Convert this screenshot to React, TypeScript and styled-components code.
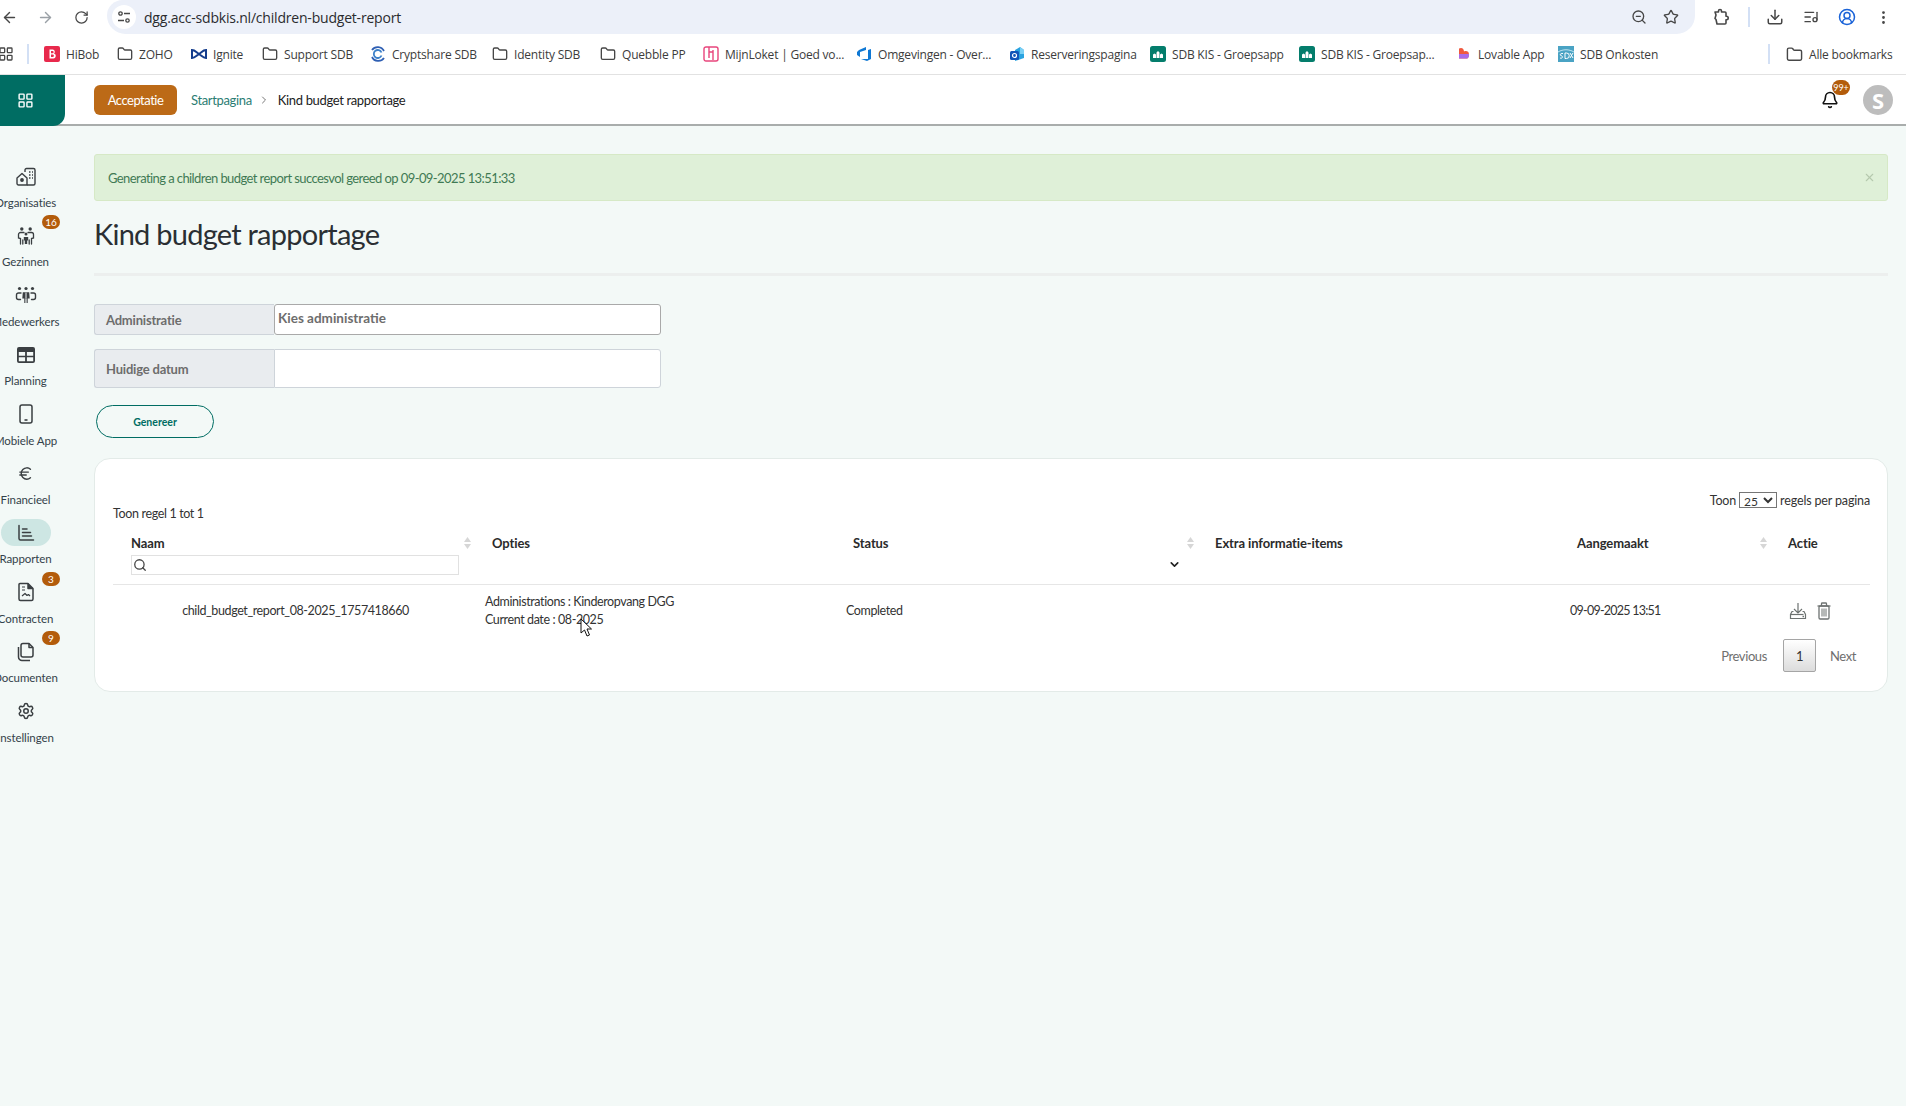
import React from 'react';
import styled, { createGlobalStyle } from 'styled-components';
import { ArrowLeft, ArrowRight, RotateCw, ZoomOut, Star, Download, ListMusic, CircleUserRound, EllipsisVertical, LayoutGrid, Folder, Bell, Search, X, ChevronDown, ChevronRight, Settings, Euro } from 'lucide-react';

const Global = createGlobalStyle`
  html, body { margin: 0; padding: 0; background: #f3f9f7; }
  * { box-sizing: border-box; }
  #root { min-height: 1106px; }
`;

const sans = `"Lato", "Noto Sans", sans-serif`;
const ui = `"Open Sans", "Noto Sans", sans-serif`;

const Page = styled.div`
  width: 1906px; height: 1106px; overflow: hidden; position: relative;
  display: flex; flex-direction: column; background: #f3f9f7; font-family: ${sans}; color: #333;
`;
const TopBar = styled.div`
  height: 36px; background: #fff; display: flex; align-items: flex-start; flex: none;
`;
const NavGroup = styled.div`
  display: flex; margin-left: -9px;
`;
const Slot = styled.div<{ $muted?: boolean; $color?: string; $narrow?: boolean; $gap?: boolean }>`
  width: ${p => (p.$narrow ? '32px' : '36px')}; height: 34px; flex: none; display: flex; align-items: center; justify-content: center;
  margin-left: ${p => (p.$gap ? '8px' : '0')};
  color: ${p => p.$color ?? (p.$muted ? '#9aa0a6' : '#474747')};
`;
const Address = styled.div`
  width: 1588px; height: 34px; margin-left: 8px; background: #ecf0f9; border-radius: 0 0 20px 20px / 0 0 20px 20px;
  border-top-left-radius: 17px; display: flex; align-items: center; padding: 0 8px 0 5px; flex: none;
`;
const TuneCircle = styled.div`
  width: 24px; height: 24px; border-radius: 50%; background: #fff; display: flex; align-items: center; justify-content: center; flex: none;
`;
const Url = styled.span`
  margin-left: 8px; font-family: ${ui}; font-size: 14px; color: #2a2b2e; flex: 1; white-space: nowrap; letter-spacing: -0.2px;
`;
const Sep = styled.div`
  width: 2px; height: 20px; background: #d3e0f5; margin: 7px 7px 0 9px; flex: none;
`;
const BookBar = styled.div`
  height: 39px; background: #fff; border-bottom: 1px solid #e2e2e2; display: flex; align-items: center; flex: none; position: relative; padding-bottom: 2px;
`;
const AppsIcon = styled.div`
  width: 29px; flex: none; display: flex; color: #474747; margin-left: -2px;
`;
const BookSep = styled.div<{ $end?: boolean }>`
  width: 2px; height: 20px; background: #d3e0f5; flex: none;
  margin-left: ${p => (p.$end ? '100px' : '0')};
  margin-right: ${p => (p.$end ? '16px' : '15px')};
`;
const Book = styled.div<{ $w: number }>`
  width: ${p => p.$w}px; flex: none; display: flex; align-items: center; gap: 6px;
  font-family: ${ui}; font-size: 12px; color: #3c3c3c; white-space: nowrap; letter-spacing: -0.2px;
`;
const FolderIcon = styled(Folder)`
  color: #474747; flex: none;
`;
const AppHeader = styled.header`
  height: 51px; background: #fff; border-bottom: 2px solid #a9adac; display: flex; align-items: center; flex: none; position: relative;
`;
const Brand = styled.div`
  width: 65px; height: 51px; margin-bottom: -2px; padding-right: 15px; background: #006d63; border-bottom-right-radius: 12px; display: flex; align-items: center; justify-content: center; color: #fff; flex: none;
`;
const EnvButton = styled.div`
  margin-left: 29px; width: 83px; height: 30px; background: #bc6a17; color: #fff; border-radius: 6px; font-size: 13px; letter-spacing: -0.5px; display: flex; align-items: center; justify-content: center; flex: none;
`;
const Crumbs = styled.nav`
  margin-left: 14px; display: flex; align-items: center; font-size: 13px; color: #222; flex: 1; letter-spacing: -0.35px;
`;
const CrumbLink = styled.span`
  color: #2b7d73;
`;
const CrumbSep = styled(ChevronRight)`
  color: #777; margin: 0 8px 0 6px;
`;
const BellWrap = styled.div`
  position: relative; width: 24px; height: 24px; display: flex; align-items: center; justify-content: center; color: #111; margin-right: 21px;
`;
const BellBadge = styled.span`
  position: absolute; left: 14px; top: -8px; width: 18px; height: 15px; border-radius: 8px; background: #b35c0b; color: #fff; font-size: 9px; display: flex; align-items: center; justify-content: center;
`;
const Avatar = styled.div`
  width: 30px; height: 30px; border-radius: 50%; background: #bdbdbd; color: #fff; font: 700 22px ${ui}; display: flex; align-items: center; justify-content: center; margin-right: 13px;
`;
const Body = styled.div`
  flex: 1; display: flex; min-height: 0;
`;
const Sidebar = styled.aside`
  width: 94px; flex: none; padding-top: 37px; display: flex; flex-direction: column;
`;
const NavItem = styled.div`
  width: 51px; height: 59.4px; flex: none; display: flex; flex-direction: column; align-items: center; position: relative;
`;
const NavIcon = styled.div<{ $active?: boolean }>`
  width: 50px; height: 27px; flex: none; border-radius: 14px; display: flex; align-items: center; justify-content: center; color: #3a3f42;
  background: ${p => (p.$active ? '#cde6e3' : 'transparent')};
`;
const NavLabel = styled.span`
  margin-top: 4px; font-size: 11.5px; line-height: 17px; color: #33424a; white-space: nowrap; letter-spacing: -0.1px;
`;
const NavBadge = styled.span`
  position: absolute; left: 42px; top: -7px; width: 18px; height: 14px; border-radius: 7px; background: #b35c0b; color: #fff; font-size: 10px; display: flex; align-items: center; justify-content: center;
`;
const Main = styled.main`
  flex: 1; min-width: 0; padding: 28px 18px 0 0;
`;
const Alert = styled.div`
  height: 47px; background: #dff0d8; border: 1px solid #d6e9c6; border-radius: 3px; color: #3f7a54; font-size: 13px; letter-spacing: -0.58px; display: flex; align-items: center; justify-content: space-between; padding: 0 11px 0 13px;
`;
const CloseIcon = styled(X)`
  color: #b5c9ae;
`;
const Title = styled.h1`
  margin: 15px 0 0; font-size: 29px; font-weight: 400; line-height: 36px; color: #2a2f33; letter-spacing: -0.75px;
`;
const Rule = styled.hr`
  margin: 21px 0 0; height: 3px; border: 0; background: #ecefee;
`;
const FormRow = styled.div<{ $h: number; $mt: number }>`
  width: 567px; height: ${p => p.$h}px; margin-top: ${p => p.$mt}px; display: flex;
`;
const FormLabel = styled.div`
  width: 180px; flex: none; background: #e9ecef; border: 1px solid #ced4da; border-right: 0; border-radius: 3px 0 0 3px; padding-left: 11px; display: flex; align-items: center; font-size: 13px; font-weight: 700; color: #6d6d6d; letter-spacing: -0.2px;
`;
const FormField = styled.div<{ $strong?: boolean }>`
  flex: 1; background: #fff; border: 1px solid ${p => (p.$strong ? '#a9a9a9' : '#ced4da')}; border-radius: ${p => (p.$strong ? '3px' : '0 3px 3px 0')}; padding: 0 0 4px 3px; display: flex; align-items: center; font-size: 13.5px; font-weight: 700; color: #6d6d6d;
`;
const Generate = styled.button`
  display: block; margin: 17px 0 0 2px; width: 118px; height: 33px; border-radius: 17px; border: 1px solid #006d63; background: transparent; color: #006d63; font: 700 10.5px ${sans}; padding: 0;
`;
const Card = styled.section`
  margin-top: 20px; height: 234px; background: #fff; border: 1px solid #e3ebe8; border-radius: 16px; padding: 33px 17px 0 18px;
`;
const CardTop = styled.div`
  display: flex; justify-content: space-between; align-items: flex-start; height: 31px; font-size: 12.5px; color: #333; letter-spacing: -0.15px;
`;
const Showing = styled.div`
  margin-top: 13px; line-height: 18px; letter-spacing: -0.35px;
`;
const PerPage = styled.div`
  display: flex; align-items: center; gap: 3px; height: 18px; margin-top: -1px;
`;
const PerSelect = styled.select`
  width: 38px; height: 16px; padding: 0; font: 12px ${sans}; border: 1px solid #767676; border-radius: 0; background: #fff; color: #333;
`;
const Grid = styled.div`
  display: grid; grid-template-columns: 361px 361px 362px 362px 211px 1fr;
`;
const HeadRow = styled(Grid)`
  height: 62px; border-bottom: 1px solid #e6e6e6; padding-top: 11px;
`;
const Head = styled.div`
  position: relative; padding-left: 18px; font-size: 13px; font-weight: 700; line-height: 18px; color: #2b2b2b; letter-spacing: -0.1px;
`;
const Sort = styled.svg`
  position: absolute; right: 3px; top: 3px;
`;
const SearchBox = styled.div`
  margin-top: 3px; width: 328px; height: 20px; border: 1px solid #e1e1e1; background: #fff; display: flex; align-items: center; padding-left: 1px; color: #444;
`;
const StatusCaret = styled.div`
  display: flex; justify-content: flex-end; padding-right: 16px; margin-top: 6px; color: #222;
`;
const DataRow = styled(Grid)`
  height: 50px; padding-top: 1px; align-items: center; font-size: 12.5px; color: #333;
`;
const Cell = styled.div<{ $center?: boolean; $tight?: boolean }>`
  padding-left: ${p => (p.$center ? '4px' : '11px')};
  text-align: ${p => (p.$center ? 'center' : 'left')};
  letter-spacing: ${p => (p.$tight ? '-0.75px' : '-0.4px')};
  line-height: 18px;
`;
const Actions = styled.div`
  display: flex; gap: 9px; padding-left: 19px; color: #6d7271; align-items: center;
`;
const Pager = styled.div`
  margin-top: 4px; display: flex; justify-content: flex-end; align-items: center; font-size: 13px; color: #6f6f6f; letter-spacing: -0.4px;
`;
const PageNum = styled.div`
  width: 33px; height: 33px; margin: 0 14px 0 16px; border: 1px solid #a5a5a5; border-radius: 2px; background: linear-gradient(#fff, #dcdcdc); color: #333; display: flex; align-items: center; justify-content: center;
`;
const Next = styled.span`
  margin-right: 14px;
`;
const Cursor = styled.svg`
  position: absolute; left: 580px; top: 618px;
`;

const BIcon = () => <svg width="16" height="16" viewBox="0 0 16 16"><rect width="16" height="16" rx="2" fill="#e8294c"/><path d="M5.5 3.5h3.2a2.2 2.2 0 0 1 1 4.1 2.4 2.4 0 0 1-.9 4.9H5.5zM7 5v2.3h1.5a1.15 1.15 0 0 0 0-2.3zM7 8.6V11h1.7a1.2 1.2 0 0 0 0-2.4z" fill="#fff" fillRule="evenodd"/></svg>;
const IgniteIcon = () => <svg width="16" height="16" viewBox="0 0 16 16" fill="none" stroke="#143c8c" strokeWidth="2"><path d="M1 4c3 0 4 2 7 4s4 4 7 4V4c-3 0-4 2-7 4s-4 4-7 4z"/></svg>;
const CryptIcon = () => <svg width="16" height="16" viewBox="0 0 16 16" fill="none" stroke="#2f5fb3" strokeWidth="1.8"><path d="M14 5a7 7 0 0 0-12-1"/><path d="M2 11a7 7 0 0 0 12 1"/><path d="M11.5 6.5a4 4 0 1 0 0 3" stroke="#3b80c9"/></svg>;
const LoketIcon = () => <svg width="16" height="16" viewBox="0 0 16 16" fill="none" stroke="#e8457c" strokeWidth="1.4"><rect x="1" y="1" width="14" height="14" rx="2"/><path d="M6 1v11M10 4v10M6 6h4v5"/></svg>;
const AzureIcon = () => <svg width="16" height="16" viewBox="0 0 16 16"><path d="M15 3v10l-4 2-6-2h7V4zM1 6l2-2 7-3v3L4 6v5L1 9z" fill="#0f78d4"/></svg>;
const OutlookIcon = () => <svg width="16" height="16" viewBox="0 0 16 16"><path d="M6 4l5-3 4 3v8l-9 3z" fill="#29a3e0"/><path d="M11 1l4 3v4h-4z" fill="#7ad0f5"/><rect x="1" y="5" width="9" height="9" rx="1.5" fill="#1256b8"/><circle cx="5.5" cy="9.5" r="2" fill="none" stroke="#fff" strokeWidth="1.2"/></svg>;
const KisIcon = () => <svg width="16" height="16" viewBox="0 0 16 16"><rect width="16" height="16" rx="2.5" fill="#047d6c"/><path d="M3 12V8.5l1.5-1L6 8.5V12zM6.5 12V6.5L8 5l1.5 1.5V12zM10 12V8.5l1.5-1L13 8.5V12z" fill="#fff"/></svg>;
const LovableIcon = () => <svg width="16" height="16" viewBox="0 0 16 16"><path d="M3 2.5c3-1.5 5 .5 5 3 2-1 5-.5 5 3 0 2-1 4-2 4H3z" fill="#f0593e"/><path d="M3 8h10v1c0 2-1 3.500-2 3.500H3z" fill="#a86be8"/></svg>;
const OnkostenIcon = () => <svg width="16" height="16" viewBox="0 0 16 16"><rect width="16" height="16" fill="#4aa3c4"/><path d="M0 6c5-3 11-3 16 0" stroke="#bfe4f0" fill="none"/><path d="M2 12c3 1 3-2 1-2.500S3 7 5 7.500M7 7v5.500h1.500a2.700 2.700 0 0 0 0-5.500zM12 7l3 5M15 7l-3 5" stroke="#fff" fill="none"/></svg>;
const TuneIcon = () => <svg width="14" height="14" viewBox="0 0 14 14" fill="none" stroke="#474747" strokeWidth="1.3"><circle cx="3.500" cy="3.500" r="1.700"/><path d="M7 3.500h6M1 10.500h6"/><circle cx="10.500" cy="10.500" r="1.700"/></svg>;
const ExtensionIcon = () => <svg width="18" height="18" viewBox="0 0 18 18" fill="none" stroke="currentColor" strokeWidth="1.600" strokeLinejoin="round"><path d="M3 4h3.500V3a1.500 1.500 0 0 1 3 0v1h3.500a1 1 0 0 1 1 1v3.300h.5a1.700 1.700 0 0 1 0 3.400H14V15a1 1 0 0 1-1 1H5l-1-4.500-1-1L4 7z"/></svg>;

const OrgIcon = () => <svg width="20" height="20" viewBox="0 0 20 20" fill="none" stroke="currentColor" strokeWidth="1.4" strokeLinejoin="round"><path d="M1 11l5-4.500L11 11v7H2.500A1.500 1.500 0 0 1 1 16.500z"/><circle cx="6" cy="13" r="1.200" fill="currentColor"/><path d="M9 5V3a1.500 1.500 0 0 1 1.500-1.500h7A1.500 1.500 0 0 1 19 3v13.500a1.500 1.500 0 0 1-1.500 1.500H11"/><path d="M13 5h1.500M16 5h1M13 8h1.500M16 8h1M13 11h1.500M16 11h1" strokeWidth="1.600"/></svg>;
const FamilyIcon = () => <svg width="20" height="20" viewBox="0 0 20 20" fill="none" stroke="currentColor" strokeWidth="1.300" strokeLinecap="round"><circle cx="5.800" cy="3" r="1.700" fill="currentColor" stroke="none"/><circle cx="14.200" cy="3" r="1.700" fill="currentColor" stroke="none"/><circle cx="10" cy="8" r="1.500" fill="currentColor" stroke="none"/><path d="M8 6.500H4.500A2 2 0 0 0 2.500 8.500V12l2 .5v5.500M12 6.500h3.500a2 2 0 0 1 2 2V12l-2 .5v5.500M6.800 18V14"/><path d="M13.200 18v-4"/><path d="M7.800 11h4.400v3.500h-1v3.500H8.800v-3.500h-1z" fill="currentColor" stroke="none"/></svg>;
const StaffIcon = () => <svg width="22" height="20" viewBox="0 0 22 20" fill="none" stroke="currentColor" strokeWidth="1.400" strokeLinecap="round"><circle cx="4.500" cy="3.500" r="1.600" fill="currentColor" stroke="none"/><circle cx="11" cy="3.500" r="1.600" fill="currentColor" stroke="none"/><circle cx="17.500" cy="3.500" r="1.600" fill="currentColor" stroke="none"/><path d="M6 8H3.500a2 2 0 0 0-2 2v2.500a2 2 0 0 0 2 2h2M16 8h2.500a2 2 0 0 1 2 2v2.500a2 2 0 0 1-2 2h-2"/><path d="M7.800 7.200h6.400l.5 6.300h-2v4.500h-1.100v-4.500h-1.200v4.500H9.300v-4.500h-2z" fill="currentColor" stroke="none"/><path d="M11 8v5" stroke="#f3f9f7" strokeWidth="1"/></svg>;
const PlanningIcon = () => <svg width="20" height="18" viewBox="0 0 20 18"><path d="M3 1h14a2 2 0 0 1 2 2v12a2 2 0 0 1-2 2H3a2 2 0 0 1-2-2V3a2 2 0 0 1 2-2zM2.800 6v3.800h6.300V6zM10.900 6v3.800h6.300V6zM2.800 11.300V15.200h6.300v-3.900zM10.900 11.300v3.900h6.300v-3.900z" fill="currentColor" fillRule="evenodd"/></svg>;
const PhoneIcon = () => <svg width="16" height="20" viewBox="0 0 16 20" fill="none" stroke="currentColor" strokeWidth="1.500"><rect x="2" y="1" width="12" height="18" rx="2"/><path d="M6.500 16h3" strokeWidth="1.600"/></svg>;
const ReportIcon = () => <svg width="18" height="18" viewBox="0 0 18 18" fill="none" stroke="currentColor" strokeWidth="1.500" strokeLinecap="round"><path d="M2 1.500v13a1.500 1.500 0 0 0 1.500 1.500h13"/><path d="M5.500 5h4.500M5.500 8.500h8M5.500 12h9"/></svg>;
const ContractIcon = () => <svg width="18" height="20" viewBox="0 0 18 20" fill="none" stroke="currentColor" strokeWidth="1.500" strokeLinejoin="round"><path d="M3 1.500h8l5 5V17a1.500 1.500 0 0 1-1.500 1.500h-11A1.500 1.500 0 0 1 2 17V2.500a1 1 0 0 1 1-1z"/><path d="M11 1.500v5h5" fill="currentColor"/><path d="M5 5h3M5 8h3M5 14l3-2.500 2 2 1.500-1 1.500 1.500" strokeWidth="1.200"/></svg>;
const DocsIcon = () => <svg width="20" height="20" viewBox="0 0 20 20" fill="none" stroke="currentColor" strokeWidth="1.500" strokeLinejoin="round"><path d="M7 1.500h6l4 4V13a2 2 0 0 1-2 2H7a2 2 0 0 1-2-2V3.500a2 2 0 0 1 2-2z"/><path d="M13 1.500v4h4"/><path d="M2.500 5v10a3.500 3.500 0 0 0 3.500 3.500h8"/></svg>;
const SaveIcon = () => <svg width="18" height="18" viewBox="0 0 18 18" fill="none" stroke="currentColor" strokeWidth="1.200"><path d="M9 1v10M5 7l4 4 4-4"/><path d="M4.500 9.500H3l-1.500 3v4h15v-4L15 9.500h-1.500"/><path d="M1.500 12.500h13"/><path d="M13.500 14.500h1.500" strokeWidth="1.400"/></svg>;
const BinIcon = () => <svg width="16" height="18" viewBox="0 0 16 18" fill="none" stroke="currentColor" strokeWidth="1.300"><path d="M1.500 4h13"/><path d="M5.500 4V1.800a.8.8 0 0 1 .8-.8h3.400a.8.8 0 0 1 .8.800V4"/><rect x="3" y="4" width="10" height="13" rx="1.200"/><path d="M6 6.500v8M8 6.500v8M10 6.500v8" strokeWidth="1"/></svg>;

const books: [number, React.ReactNode, string][] = [
  [73, <BIcon />, 'HiBob'],
  [74, <FolderIcon size={16} />, 'ZOHO'],
  [71, <IgniteIcon />, 'Ignite'],
  [108, <FolderIcon size={16} />, 'Support SDB'],
  [122, <CryptIcon />, 'Cryptshare SDB'],
  [108, <FolderIcon size={16} />, 'Identity SDB'],
  [103, <FolderIcon size={16} />, 'Quebble PP'],
  [153, <LoketIcon />, 'MijnLoket | Goed vo...'],
  [153, <AzureIcon />, 'Omgevingen - Over...'],
  [141, <OutlookIcon />, 'Reserveringspagina'],
  [149, <KisIcon />, 'SDB KIS - Groepsapp'],
  [157, <KisIcon />, 'SDB KIS - Groepsap...'],
  [102, <LovableIcon />, 'Lovable App'],
];

const nav: { icon: React.ReactNode; label: string; badge?: string; active?: boolean }[] = [
  { icon: <OrgIcon />, label: 'Organisaties' },
  { icon: <FamilyIcon />, label: 'Gezinnen', badge: '16' },
  { icon: <StaffIcon />, label: 'Medewerkers' },
  { icon: <PlanningIcon />, label: 'Planning' },
  { icon: <PhoneIcon />, label: 'Mobiele App' },
  { icon: <Euro size={17} />, label: 'Financieel' },
  { icon: <ReportIcon />, label: 'Rapporten', active: true },
  { icon: <ContractIcon />, label: 'Contracten', badge: '3' },
  { icon: <DocsIcon />, label: 'Documenten', badge: '9' },
  { icon: <Settings size={18} />, label: 'Instellingen' },
];

const SortMark = () => (
  <Sort width="7" height="12" viewBox="0 0 7 12">
    <path d="M3.500 0L7 5H0z" fill="#d6d6d6" />
    <path d="M3.500 12L0 7h7z" fill="#d6d6d6" />
  </Sort>
);

export default function App() {
  return (
    <Page>
      <Global />
      <TopBar>
        <NavGroup>
          <Slot><ArrowLeft size={17} /></Slot>
          <Slot $muted><ArrowRight size={17} /></Slot>
          <Slot><RotateCw size={15} /></Slot>
        </NavGroup>
        <Address>
          <TuneCircle><TuneIcon /></TuneCircle>
          <Url>dgg.acc-sdbkis.nl/children-budget-report</Url>
          <Slot $narrow><ZoomOut size={16} /></Slot>
          <Slot $narrow><Star size={16} /></Slot>
        </Address>
        <Slot $gap><ExtensionIcon /></Slot>
        <Sep />
        <Slot><Download size={18} /></Slot>
        <Slot><ListMusic size={16} /></Slot>
        <Slot $color="#1a63d8"><CircleUserRound size={18} /></Slot>
        <Slot><EllipsisVertical size={17} /></Slot>
      </TopBar>
      <BookBar>
        <AppsIcon><LayoutGrid size={16} /></AppsIcon>
        <BookSep />
        {books.map(([w, icon, text]) => (
          <Book key={text} $w={w}>{icon}<span>{text}</span></Book>
        ))}
        <Book $w={110}><OnkostenIcon /><span>SDB Onkosten</span></Book>
        <BookSep $end />
        <Book $w={120}><FolderIcon size={17} /><span>Alle bookmarks</span></Book>
      </BookBar>
      <AppHeader>
        <Brand><LayoutGrid size={17} /></Brand>
        <EnvButton>Acceptatie</EnvButton>
        <Crumbs>
          <CrumbLink>Startpagina</CrumbLink>
          <CrumbSep size={12} />
          <span>Kind budget rapportage</span>
        </Crumbs>
        <BellWrap>
          <Bell size={18} strokeWidth={2.2} />
          <BellBadge>99+</BellBadge>
        </BellWrap>
        <Avatar>S</Avatar>
      </AppHeader>
      <Body>
        <Sidebar>
          {nav.map(n => (
            <NavItem key={n.label}>
              <NavIcon $active={n.active}>{n.icon}</NavIcon>
              <NavLabel>{n.label}</NavLabel>
              {n.badge && <NavBadge>{n.badge}</NavBadge>}
            </NavItem>
          ))}
        </Sidebar>
        <Main>
          <Alert>
            <span>Generating a children budget report succesvol gereed op 09-09-2025 13:51:33</span>
            <CloseIcon size={13} />
          </Alert>
          <Title>Kind budget rapportage</Title>
          <Rule />
          <FormRow $h={31} $mt={28}>
            <FormLabel>Administratie</FormLabel>
            <FormField $strong>Kies administratie</FormField>
          </FormRow>
          <FormRow $h={39} $mt={14}>
            <FormLabel>Huidige datum</FormLabel>
            <FormField />
          </FormRow>
          <Generate>Genereer</Generate>
          <Card>
            <CardTop>
              <Showing>Toon regel 1 tot 1</Showing>
              <PerPage>
                Toon
                <PerSelect defaultValue="25"><option value="25">25</option></PerSelect>
                regels per pagina
              </PerPage>
            </CardTop>
            <HeadRow>
              <Head>
                Naam
                <SortMark />
                <SearchBox><Search size={14} strokeWidth={2.2} /></SearchBox>
              </Head>
              <Head>Opties</Head>
              <Head>
                Status
                <SortMark />
                <StatusCaret><ChevronDown size={13} strokeWidth={3} /></StatusCaret>
              </Head>
              <Head>Extra informatie-items</Head>
              <Head>Aangemaakt<SortMark /></Head>
              <Head>Actie</Head>
            </HeadRow>
            <DataRow>
              <Cell $center>child_budget_report_08-2025_1757418660</Cell>
              <Cell>Administrations : Kinderopvang DGG<br />Current date : 08-2025</Cell>
              <Cell>Completed</Cell>
              <Cell />
              <Cell $tight>09-09-2025 13:51</Cell>
              <Actions><SaveIcon /><BinIcon /></Actions>
            </DataRow>
            <Pager>
              <span>Previous</span>
              <PageNum>1</PageNum>
              <Next>Next</Next>
            </Pager>
          </Card>
        </Main>
      </Body>
      <Cursor width="13" height="20" viewBox="0 0 13 20">
        <path d="M1 1v14l3.500-3 2.500 6 2.500-1-2.500-6h4.500z" fill="#fff" stroke="#111" strokeWidth="1" />
      </Cursor>
    </Page>
  );
}
